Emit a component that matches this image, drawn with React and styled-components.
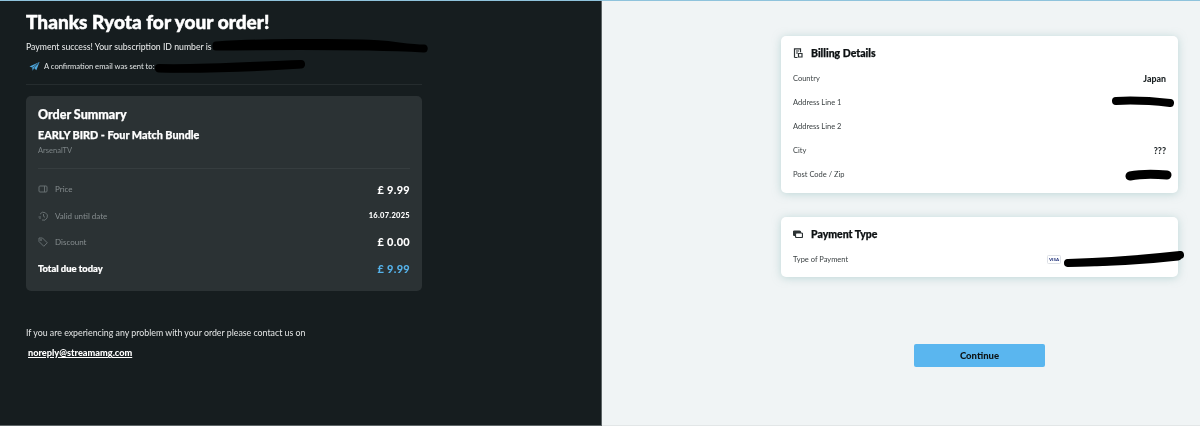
import React from "react";
import styled, { createGlobalStyle } from "styled-components";

const Global = createGlobalStyle`
  html, body { margin: 0; padding: 0; background: #fff; }
  body { font-family: "Lato", "Liberation Sans", sans-serif; }
`;

const Page = styled.div`
  display: grid;
  grid-template-columns: 602px 598px;
  height: 426px;
  border-top: 1px solid #8fc3dc;
  box-sizing: border-box;
  filter: blur(0.4px);
`;

const LeftPanel = styled.section`
  background: #161d1f;
  color: #fff;
  padding: 11px 179px 0 26px;
  box-sizing: border-box;
  border-right: 1px solid #5d6466;
  border-bottom: 1px solid #5d6466;
`;

const Title = styled.h1`
  margin: 0;
  font-size: 19px;
  line-height: 20px;
  font-weight: 900;
  letter-spacing: 0.03px;
  -webkit-text-stroke: 0.5px #fff;
`;

const PaymentLine = styled.p`
  margin: 4px 0 0;
  display: flex;
  align-items: center;
  height: 20px;
  font-size: 8.7px;
  color: #eceeee;
  white-space: nowrap;
`;

const ConfirmLine = styled.p`
  margin: 0;
  padding: 0 0 0 2px;
  display: flex;
  align-items: center;
  height: 20px;
  font-size: 7.6px;
  color: #e2e5e5;
  white-space: nowrap;
`;

const PlaneIcon = styled.svg`
  width: 11px;
  height: 11px;
  margin-right: 4px;
  margin-left: 1px;
  flex: none;
`;

const Scribble = styled.svg`
  flex: none;
  display: block;
`;

const Divider = styled.hr`
  border: 0;
  height: 1px;
  background: #252c2e;
  margin: 8px 0 11px;
`;

const SummaryCard = styled.div`
  background: #2b3234;
  border-radius: 5px;
  padding: 11px 12px 0;
  height: 195px;
  box-sizing: border-box;
`;

const SummaryTitle = styled.h2`
  margin: 0;
  font-size: 12.5px;
  line-height: 16px;
  font-weight: 900;
  -webkit-text-stroke: 0.25px #fff;
`;

const Product = styled.h3`
  margin: 4px 0 0;
  font-size: 10.8px;
  line-height: 16px;
  font-weight: 900;
  -webkit-text-stroke: 0.25px #fff;
`;

const Brand = styled.div`
  margin-top: 2px;
  font-size: 7.5px;
  line-height: 12px;
  color: #7d8587;
`;

const CardRule = styled.div`
  height: 1px;
  background: #363d3f;
  margin: 11px 0 0;
`;

const SummaryRows = styled.div`
  display: flex;
  flex-direction: column;
  margin-top: 7px;
`;

const SummaryRow = styled.div`
  display: flex;
  align-items: center;
  justify-content: space-between;
  height: 26.4px;
`;

const RowLabel = styled.div`
  display: flex;
  align-items: center;
  gap: 7px;
  font-size: 8px;
  color: #868d8f;
`;

const RowIcon = styled.svg`
  width: 10px;
  height: 10px;
  flex: none;
  fill: none;
  stroke: #666e70;
  stroke-width: 1;
`;

const RowValue = styled.div`
  font-size: ${(p) => p.$size || 11}px;
  font-weight: 900;
  color: ${(p) => p.$color || "#fff"};
  letter-spacing: 0.3px;
`;

const TotalLabel = styled.div`
  font-size: 9.4px;
  font-weight: 900;
  color: #fff;
  -webkit-text-stroke: 0.2px #fff;
`;

const Help = styled.p`
  margin: 36px 0 0;
  font-size: 8.8px;
  line-height: 12px;
  color: #e4e6e6;
`;

const Mail = styled.a`
  display: inline-block;
  margin: 8px 0 0 2px;
  font-size: 9.2px;
  line-height: 11px;
  font-weight: 900;
  color: #fff;
  text-decoration: underline;
`;

const RightPanel = styled.section`
  background: #f0f4f5;
  padding: 35px 22px 0 179px;
  box-sizing: border-box;
  display: flex;
  flex-direction: column;
  border-bottom: 1px solid #e2e6e7;
`;

const Card = styled.div`
  background: #fff;
  border-radius: 5px;
  padding: 8px 12px 0;
  height: ${(p) => p.$height}px;
  box-sizing: border-box;
  box-shadow: 0 1px 9px rgba(140, 185, 185, 0.5);
  margin-bottom: 24px;
  flex: none;
`;

const CardHead = styled.div`
  display: flex;
  align-items: center;
  gap: 8px;
  height: 17px;
  margin-bottom: 5px;
`;

const CardHeadIcon = styled.svg`
  width: 10px;
  height: 10px;
  fill: none;
  stroke: #2c3234;
  stroke-width: 1.2;
  flex: none;
`;

const CardTitle = styled.h2`
  margin: 0;
  font-size: 10.5px;
  font-weight: 900;
  color: #0c1012;
  -webkit-text-stroke: 0.25px #0c1012;
`;

const DetailRow = styled.div`
  display: flex;
  align-items: center;
  justify-content: space-between;
  height: 24.2px;
  font-size: 7.5px;
  color: #3c4244;
`;

const DetailValue = styled.span`
  font-weight: 900;
  font-size: 8.8px;
  color: #1c2224;
  display: flex;
  align-items: center;
`;

const ValueSlot = styled.span`
  display: flex;
  align-items: center;
  margin-right: ${(p) => p.$right}px;
`;

const VisaBadge = styled.span`
  display: inline-flex;
  align-items: center;
  justify-content: center;
  width: 14px;
  height: 9px;
  box-sizing: border-box;
  border: 1px solid #dde0e6;
  border-radius: 1.5px;
  font-size: 4.5px;
  font-weight: 900;
  color: #2a3a80;
  margin-right: 3px;
  background: #fff;
`;

const ContinueButton = styled.button`
  align-self: center;
  margin-top: 43px;
  width: 131px;
  height: 23px;
  border: 0;
  border-radius: 2px;
  background: #5ab6ef;
  color: #0d1416;
  font-family: inherit;
  font-size: 9.5px;
  font-weight: 900;
  flex: none;
`;

const ink = { fill: "none", stroke: "#000", strokeLinecap: "round" };

export default function App() {
  return (
    <>
      <Global />
      <Page>
        <LeftPanel>
          <Title>Thanks Ryota for your order!</Title>
          <PaymentLine>
            Payment success! Your subscription ID number is
            <Scribble width="216" height="14" viewBox="0 0 216 14">
              <path {...ink} strokeWidth="7" d="M4 6 C50 3 100 3 150 4 C175 4 195 9 212 9" />
              <path {...ink} strokeWidth="7" d="M4 8 C60 8 130 6 212 10" />
            </Scribble>
          </PaymentLine>
          <ConfirmLine>
            <PlaneIcon viewBox="0 0 12 12">
              <path fill="#4fa8de" d="M0.5 6 L11.5 1 L8 10 L5.5 7.5 L4 10.5 L3.5 7 Z" />
              <path fill="none" stroke="#16232a" strokeWidth="0.6" d="M3.5 7 L10 2.5 L5.5 7.5" />
            </PlaneIcon>
            A confirmation email was sent to:
            <Scribble width="150" height="14" viewBox="0 0 150 14">
              <path {...ink} strokeWidth="8" d="M4 9 C50 10 90 7 146 5" />
              <path {...ink} strokeWidth="7" d="M4 10 C60 11 100 9 146 6" />
            </Scribble>
          </ConfirmLine>
          <Divider />
          <SummaryCard>
            <SummaryTitle>Order Summary</SummaryTitle>
            <Product>EARLY BIRD - Four Match Bundle</Product>
            <Brand>ArsenalTV</Brand>
            <CardRule />
            <SummaryRows>
              <SummaryRow>
                <RowLabel>
                  <RowIcon viewBox="0 0 10 10">
                    <rect x="1" y="2" width="8" height="6" rx="1" />
                    <path d="M6.5 2v6" />
                  </RowIcon>
                  Price
                </RowLabel>
                <RowValue>£ 9.99</RowValue>
              </SummaryRow>
              <SummaryRow>
                <RowLabel>
                  <RowIcon viewBox="0 0 10 10">
                    <path d="M2 3.2A4 4 0 1 1 4 9" />
                    <path d="M5.5 3v2.3l1.5 1" />
                    <path d="M0.5 6h2.5M1.5 7.5h1" />
                  </RowIcon>
                  Valid until date
                </RowLabel>
                <RowValue $size={7.5}>16.07.2025</RowValue>
              </SummaryRow>
              <SummaryRow>
                <RowLabel>
                  <RowIcon viewBox="0 0 10 10">
                    <path d="M1 1h3.5L9.3 5.8 5.8 9.3 1 4.5Z" />
                    <circle cx="3" cy="3" r="0.6" />
                  </RowIcon>
                  Discount
                </RowLabel>
                <RowValue>£ 0.00</RowValue>
              </SummaryRow>
              <SummaryRow>
                <TotalLabel>Total due today</TotalLabel>
                <RowValue $color="#55b2ea">£ 9.99</RowValue>
              </SummaryRow>
            </SummaryRows>
          </SummaryCard>
          <Help>If you are experiencing any problem with your order please contact us on</Help>
          <Mail>noreply@streamamg.com</Mail>
        </LeftPanel>
        <RightPanel>
          <Card $height={157}>
            <CardHead>
              <CardHeadIcon viewBox="0 0 10 10">
                <path d="M1.5 9.5V.8h6v3.5M1.5 9.5h3" />
                <path d="M3 3h3M3 5h2" />
                <path d="M5.5 5.5h3.5v3.5h-3.5z" />
              </CardHeadIcon>
              <CardTitle>Billing Details</CardTitle>
            </CardHead>
            <DetailRow>
              Country
              <DetailValue>Japan</DetailValue>
            </DetailRow>
            <DetailRow>
              Address Line 1
              <ValueSlot $right={-8}>
                <Scribble width="62" height="12" viewBox="0 0 62 12">
                  <path {...ink} strokeWidth="8" d="M4 5 C20 4 40 5 58 7" />
                </Scribble>
              </ValueSlot>
            </DetailRow>
            <DetailRow>Address Line 2</DetailRow>
            <DetailRow>
              City
              <DetailValue>???</DetailValue>
            </DetailRow>
            <DetailRow>
              Post Code / Zip
              <ValueSlot $right={-6}>
                <Scribble width="47" height="12" viewBox="0 0 47 12">
                  <path {...ink} strokeWidth="9" d="M5 7 C15 5 30 5 42 6" />
                </Scribble>
              </ValueSlot>
            </DetailRow>
          </Card>
          <Card $height={60}>
            <CardHead>
              <CardHeadIcon viewBox="0 0 10 10">
                <rect x="0.5" y="2" width="7" height="4.5" rx="1" fill="#2c3234" />
                <rect x="2.5" y="4" width="7" height="4.5" rx="1" fill="#fff" />
              </CardHeadIcon>
              <CardTitle>Payment Type</CardTitle>
            </CardHead>
            <DetailRow>
              Type of Payment
              <ValueSlot $right={-18}>
                <VisaBadge>VISA</VisaBadge>
                <Scribble width="120" height="16" viewBox="0 0 120 16">
                  <path {...ink} strokeWidth="8" d="M4 12 C40 11 70 9 116 4" />
                  <path {...ink} strokeWidth="7" d="M4 12 C40 12 80 10 114 6" />
                </Scribble>
              </ValueSlot>
            </DetailRow>
          </Card>
          <ContinueButton>Continue</ContinueButton>
        </RightPanel>
      </Page>
    </>
  );
}
